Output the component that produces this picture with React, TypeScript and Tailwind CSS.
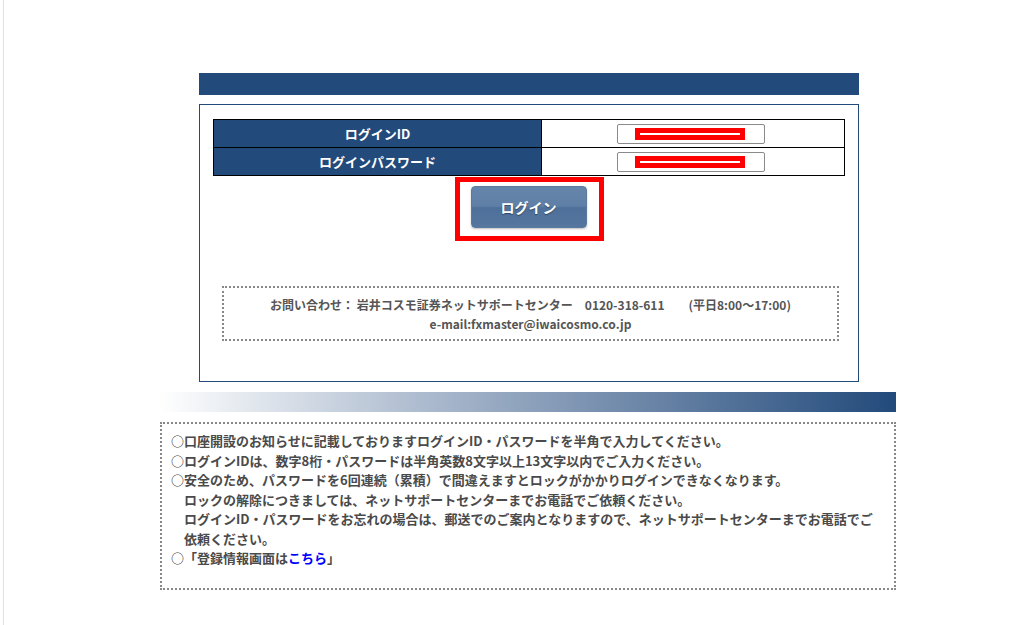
import { useState } from 'react';

const notes = [
    { text: '○口座開設のお知らせに記載しておりますログインID・パスワードを半角で入力してください。', indent: false },
    { text: '○ログインIDは、数字8桁・パスワードは半角英数8文字以上13文字以内でご入力ください。', indent: false },
    { text: '○安全のため、パスワードを6回連続（累積）で間違えますとロックがかかりログインできなくなります。', indent: false },
    { text: 'ロックの解除につきましては、ネットサポートセンターまでお電話でご依頼ください。', indent: true },
    { text: 'ログインID・パスワードをお忘れの場合は、郵送でのご案内となりますので、ネットサポートセンターまでお電話でご', indent: true },
    { text: '依頼ください。', indent: true },
];

function RedactedInput() {
    return (
        <div className="w-[148px] h-[20px] border border-[#8a8a8a] rounded-[2px] bg-white flex items-center pl-[17px]">
            <div className="w-[110px] h-[12px] border-[5px] border-[#ff0000] bg-white" />
        </div>
    );
}

export default function App() {
    const [loginId] = useState('');

    return (
        <div
            className="min-h-screen ml-[3px] border-l border-[#e2e2e2] bg-white text-[13px]"
            style={{ fontFamily: '"Noto Sans CJK JP", "Noto Sans", sans-serif' }}
            data-id={loginId}
        >
            <div className="ml-[156px] w-[736px] pt-[73px] pb-[36px]">
                {/* Login panel */}
                <div className="ml-[39px] w-[660px]">
                    <div className="h-[22px] bg-[#224a7b]" />
                    <div className="mt-[9px] h-[278px] border border-[#224a7b] pt-[14px] px-[13px]">
                        <table className="w-[632px] border-collapse border border-black">
                            <tbody>
                                <tr className="h-[28px]">
                                    <td className="w-[328px] border border-black bg-[#224a7b] text-white font-bold text-center">ログインID</td>
                                    <td className="border border-black">
                                        <div className="flex justify-center pr-[4px]"><RedactedInput /></div>
                                    </td>
                                </tr>
                                <tr className="h-[28px]">
                                    <td className="w-[328px] border border-black bg-[#224a7b] text-white font-bold text-center">ログインパスワード</td>
                                    <td className="border border-black">
                                        <div className="flex justify-center pr-[4px]"><RedactedInput /></div>
                                    </td>
                                </tr>
                            </tbody>
                        </table>

                        <div className="flex justify-center mt-[1px]">
                            <div className="w-[149px] h-[64px] border-[5px] border-[#ff0000] pt-[4px] pl-[11px]">
                                <button className="w-[116px] h-[42px] rounded-[4px] border border-[#5a7aa0] bg-[linear-gradient(#6785ab_0%,#5f7fa6_48%,#4d6f99_52%,#55779f_100%)] shadow-[0_1px_2px_rgba(0,0,0,0.25)] text-white font-bold text-[14px] [text-shadow:0_1px_1px_rgba(0,0,0,0.4)]">
                                    ログイン
                                </button>
                            </div>
                        </div>

                        {/* Contact */}
                        <div className="mt-[45px] ml-[9px] w-[617px] h-[55px] border-2 border-dotted border-[#888] flex flex-col items-center justify-center text-[#555] text-[12px] font-bold leading-[19px]">
                            <p className="whitespace-pre">お問い合わせ： 岩井コスモ証券ネットサポートセンター　0120-318-611　　(平日8:00～17:00)</p>
                            <p>e-mail:fxmaster@iwaicosmo.co.jp</p>
                        </div>
                    </div>
                </div>

                {/* Gradient divider */}
                <div className="mt-[10px] -ml-px w-[737px] h-[20px] bg-[linear-gradient(to_right,#ffffff,#a3b3c9_40%,#224a7b)]" />

                {/* Notes */}
                <div className="mt-[10px] h-[168px] border-2 border-dotted border-[#888] pt-[7px] pl-[9px] text-[#4a4a4a] font-bold leading-[19.5px]">
                    {notes.map((n, i) => (
                        <div key={i} className={`whitespace-nowrap h-[19.5px] ${n.indent ? 'pl-[13px]' : ''}`}>{n.text}</div>
                    ))}
                    <div className="whitespace-nowrap h-[19.5px]">
                        ○「登録情報画面は<a href="#" className="text-[#0000ff]">こちら</a>」
                    </div>
                </div>
            </div>
        </div>
    );
}
